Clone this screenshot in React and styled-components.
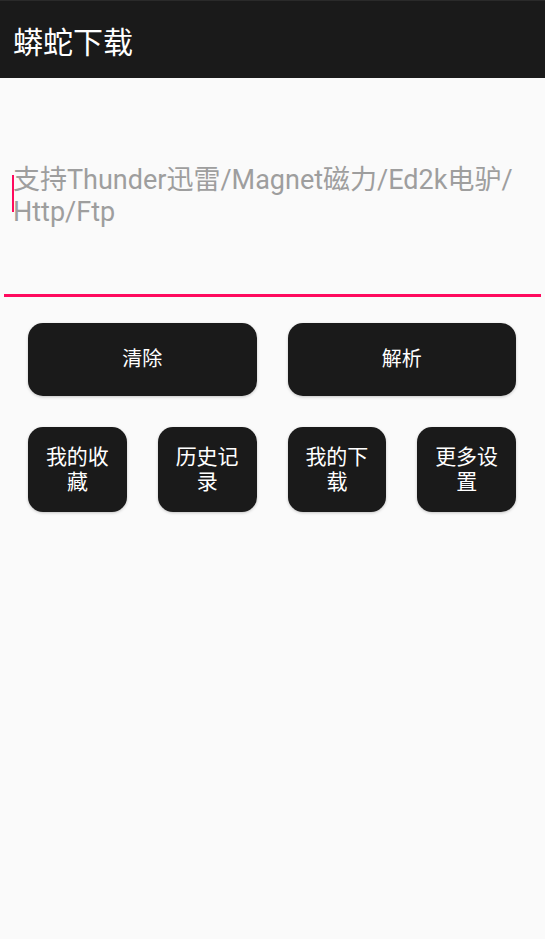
import styled, { createGlobalStyle } from "styled-components";

const GlobalStyle = createGlobalStyle`
  html, body {
    margin: 0;
    padding: 0;
    background: #fafafa;
  }
  body {
    font-family: Roboto, "Noto Sans CJK SC", sans-serif;
  }
`;

const Page = styled.div`
  width: 545px;
  height: 939px;
  background: #fafafa;
  display: flex;
  flex-direction: column;
`;

const Toolbar = styled.header`
  height: 78px;
  background: #1a1a1a;
  border-top: 1px solid #2a2a2a;
  box-sizing: border-box;
  display: flex;
  align-items: center;
  padding: 0 13px;
`;

const Title = styled.h1`
  margin: 0;
  font-size: 30px;
  font-weight: 400;
  color: #ffffff;
  font-family: Roboto, "Noto Sans CJK SC", sans-serif;
`;

const InputField = styled.div`
  margin: 0 4px;
  height: 219px;
  border-bottom: 3px solid #ff0a5e;
  box-sizing: border-box;
  padding: 86px 4px 0 9px;
  position: relative;
`;

const Placeholder = styled.div`
  font-size: 27px;
  line-height: 32px;
  color: #9e9e9e;
  font-family: Roboto, "Noto Sans CJK SC", sans-serif;
`;

const Cursor = styled.span`
  position: absolute;
  left: 8px;
  top: 97px;
  width: 2px;
  height: 37px;
  background: #ff0a5e;
`;

const Actions = styled.div`
  display: flex;
  flex-direction: column;
  gap: 31px;
  padding: 26px 29px 0 28px;
`;

const Row = styled.div`
  display: grid;
  grid-template-columns: repeat(${(p) => p.$cols}, 1fr);
  column-gap: 31px;
`;

const Button = styled.button`
  height: ${(p) => p.$h}px;
  border: none;
  border-radius: 15px;
  background: #1a1a1a;
  color: #ffffff;
  font-size: ${(p) => (p.$h > 80 ? 21 : 20)}px;
  line-height: 25px;
  font-family: Roboto, "Noto Sans CJK SC", sans-serif;
  padding: 0 14px;
  box-shadow: 0 1px 3px rgba(0, 0, 0, 0.22);
  display: flex;
  align-items: center;
  justify-content: center;
  text-align: center;
`;

export default function App() {
  return (
    <Page>
      <GlobalStyle />
      <Toolbar>
        <Title>蟒蛇下载</Title>
      </Toolbar>
      <InputField>
        <Cursor />
        <Placeholder>
          支持Thunder迅雷/Magnet磁力/Ed2k电驴/<wbr />Http/Ftp
        </Placeholder>
      </InputField>
      <Actions>
        <Row $cols={2}>
          <Button $h={73}>清除</Button>
          <Button $h={73}>解析</Button>
        </Row>
        <Row $cols={4}>
          <Button $h={85}>我的收藏</Button>
          <Button $h={85}>历史记录</Button>
          <Button $h={85}>我的下载</Button>
          <Button $h={85}>更多设置</Button>
        </Row>
      </Actions>
    </Page>
  );
}
